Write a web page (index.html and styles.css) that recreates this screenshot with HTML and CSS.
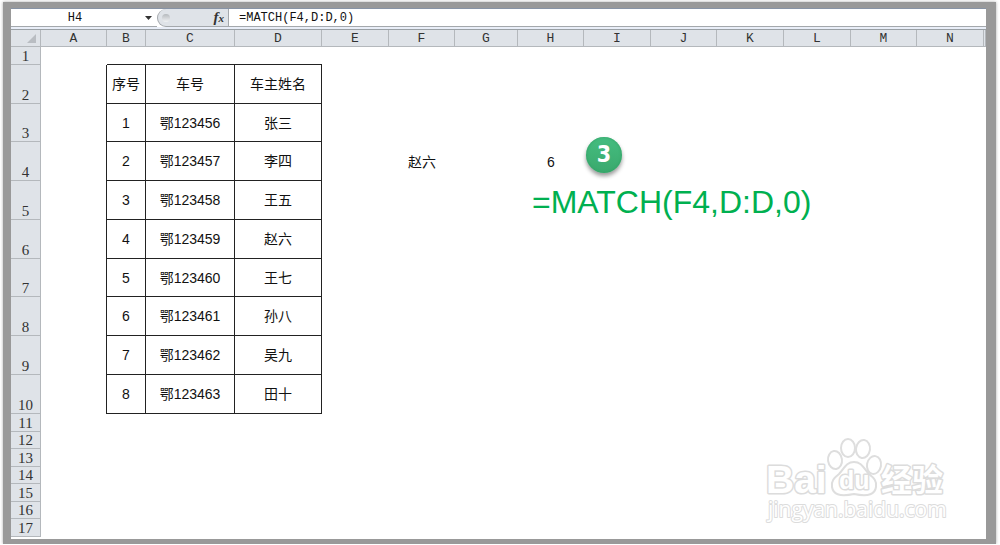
FILE: index.html
```
<!DOCTYPE html>
<html lang="zh-CN">
<head>
<meta charset="utf-8">
<title>H4 =MATCH(F4,D:D,0)</title>
<link rel="stylesheet" href="styles.css">
</head>
<body>
<main class="frame">
  <header class="formula-bar">
    <input class="name-box" type="text" value="H4" aria-label="名称框">
    <button class="drop" type="button" aria-label="名称列表"><svg width="7" height="4" viewBox="0 0 7 4"><path d="M0 0h7L3.500 4z" fill="#333"/></svg></button>
    <div class="tools">
      <span class="knob"></span>
      <button class="fx" type="button" aria-label="插入函数"><i>f</i><i class="fx-x">x</i></button>
    </div>
    <input class="formula" type="text" value="=MATCH(F4,D:D,0)" aria-label="编辑栏">
  </header>
  <div class="sheet-area">
    <table class="sheet">
      <colgroup>
        <col class="w30"><col class="w66"><col class="w39"><col class="w89"><col class="w87"><col class="w67"><col class="w66"><col class="w63"><col class="w66"><col class="w67"><col class="w66"><col class="w67"><col class="w67"><col class="w66"><col class="w67"><col>
      </colgroup>
      <thead>
        <tr><th class="corner"><svg width="9" height="9" viewBox="0 0 9 9"><path d="M9 0v9H0z" fill="#b9bdc2"/></svg></th><th>A</th><th>B</th><th>C</th><th>D</th><th>E</th><th>F</th><th>G</th><th>H</th><th>I</th><th>J</th><th>K</th><th>L</th><th>M</th><th>N</th><th></th></tr>
      </thead>
      <tbody>
        <tr class="short"><th>1</th><td></td><td class="under"></td><td class="under"></td><td class="under"></td><td colspan="11"></td></tr>
        <tr><th>2</th><td class="edge"></td><td class="box">序号</td><td class="box">车号</td><td class="box">车主姓名</td><td colspan="11"></td></tr>
        <tr class="mid"><th>3</th><td class="edge"></td><td class="box">1</td><td class="box">鄂123456</td><td class="box">张三</td><td colspan="11"></td></tr>
        <tr><th>4</th><td class="edge"></td><td class="box">2</td><td class="box">鄂123457</td><td class="box">李四</td><td></td><td>赵六</td><td></td><td>6</td><td colspan="7"></td></tr>
        <tr><th>5</th><td class="edge"></td><td class="box">3</td><td class="box">鄂123458</td><td class="box">王五</td><td colspan="11"></td></tr>
        <tr><th>6</th><td class="edge"></td><td class="box">4</td><td class="box">鄂123459</td><td class="box">赵六</td><td colspan="11"></td></tr>
        <tr class="mid"><th>7</th><td class="edge"></td><td class="box">5</td><td class="box">鄂123460</td><td class="box">王七</td><td colspan="11"></td></tr>
        <tr><th>8</th><td class="edge"></td><td class="box">6</td><td class="box">鄂123461</td><td class="box">孙八</td><td colspan="11"></td></tr>
        <tr><th>9</th><td class="edge"></td><td class="box">7</td><td class="box">鄂123462</td><td class="box">吴九</td><td colspan="11"></td></tr>
        <tr><th>10</th><td class="edge"></td><td class="box">8</td><td class="box">鄂123463</td><td class="box">田十</td><td colspan="11"></td></tr>
        <tr class="short"><th>11</th><td colspan="15"></td></tr>
        <tr class="short"><th>12</th><td colspan="15"></td></tr>
        <tr class="short"><th>13</th><td colspan="15"></td></tr>
        <tr class="short"><th>14</th><td colspan="15"></td></tr>
        <tr class="short"><th>15</th><td colspan="15"></td></tr>
        <tr class="short"><th>16</th><td colspan="15"></td></tr>
        <tr class="short"><th>17</th><td colspan="15"></td></tr>
      </tbody>
    </table>
    <span class="step">3</span>
    <p class="note">=MATCH(F4,D:D,0)</p>
    <svg class="watermark" width="190" height="94" viewBox="0 0 190 94">
      <g fill="#fff" stroke="#dedede" stroke-width="2" stroke-linejoin="round">
        <ellipse cx="75" cy="23" rx="7" ry="9" transform="rotate(-8 75 23)"/>
        <ellipse cx="88" cy="11" rx="7" ry="9"/>
        <ellipse cx="103" cy="12" rx="7" ry="9" transform="rotate(8 103 12)"/>
        <ellipse cx="114" cy="28" rx="7" ry="9" transform="rotate(10 114 28)"/>
        <path d="M94 25C86 25 84 32 79 37C74 41 71 44 72 50C73 57 79 60 94 57C109 60 115 57 116 50C117 44 114 41 109 37C104 32 102 25 94 25Z"/>
      </g>
      <g class="wm-text">
        <text class="wm-latin" x="6" y="56">Bai</text>
        <text class="wm-du" x="79" y="52">du</text>
        <text class="wm-cjk" x="121" y="54">经验</text>
        <text class="wm-url" x="8" y="80">jingyan.baidu.com</text>
      </g>
    </svg>
  </div>
</main>
</body>
</html>
```
FILE: styles.css
```
* { box-sizing: border-box; }
html { background: #fff; }
body { margin: 0; padding: 2px 4px 0 3px; }
.frame {
  border: solid #999;
  border-width: 6px 10px 5px 8px;
  box-shadow: 0 0 3px #aaa;
  background: #fff;
}
.formula-bar {
  display: flex;
  height: 22px;
  padding-bottom: 3px;
  border-top: 1px solid #8793a5;
  border-bottom: 1px solid #9aa0a5;
  background: linear-gradient(#fff 18px, #e9eef8 18px);
}
.formula-bar input, .formula-bar button {
  height: 18px;
  margin: 0;
  padding: 0;
  border: 0;
  border-bottom: 1px solid #a4a8ac;
  background: #fff;
  color: #111;
  outline: 0;
}
.formula-bar input { font: 12px/17px "Liberation Mono", monospace; }
.formula-bar .name-box { width: 128px; text-align: center; }
.formula-bar .drop { width: 18px; display: flex; align-items: center; justify-content: center; }
.tools {
  width: 72px;
  height: 18px;
  display: flex;
  align-items: center;
  justify-content: space-between;
  padding: 0 4px;
  border: 1px solid #a4a8ac;
  border-top: 0;
  border-radius: 9px 0 0 9px;
  background: #dfe3e8;
}
.knob { width: 8px; height: 8px; border-radius: 4px; background: linear-gradient(#b5b9bd, #f0f2f4); }
.formula-bar .fx {
  border: 0;
  height: 17px;
  background: none;
  font: bold 15px/16px "Liberation Serif", serif;
  color: #333;
}
.fx .fx-x { font-size: 11px; }
.formula-bar .formula { flex: 1; min-width: 0; padding-left: 10px; }
.sheet-area { position: relative; padding-bottom: 2px; }
.sheet { width: 100%; table-layout: fixed; border-collapse: separate; border-spacing: 0; }
.w30 { width: 30px; } .w39 { width: 39px; } .w63 { width: 63px; }
.w66 { width: 66px; } .w67 { width: 67px; } .w87 { width: 87px; } .w89 { width: 89px; }
.sheet th {
  padding: 0;
  border-right: 1px solid #b4b8bc;
  border-bottom: 1px solid #b4b8bc;
  background: #dfe3e8;
  color: #333;
  font: 15px/15px "Liberation Serif", serif;
  vertical-align: bottom;
}
.sheet thead th { height: 17px; font: 13px/14px "Liberation Mono", monospace; }
.sheet thead .corner { text-align: right; line-height: 9px; padding: 0 4px 3px 0; }
.corner svg { display: inline-block; vertical-align: bottom; }
.sheet tbody tr { height: 39px; }
.sheet tbody .mid { height: 38px; }
.sheet tbody .short { height: 18px; }
.sheet tbody .short:nth-child(even) { height: 17px; }
.sheet td {
  padding: 0;
  text-align: center;
  vertical-align: middle;
  color: #111;
  font: 14px/16px "Liberation Sans", "Noto Sans CJK SC", sans-serif;
  white-space: nowrap;
}
.sheet .box { border-right: 1px solid #222; border-bottom: 1px solid #222; }
.sheet .edge { border-right: 1px solid #222; }
.sheet .under { border-bottom: 1px solid #222; }
.step {
  position: absolute;
  left: 575px;
  top: 107px;
  width: 36px;
  height: 36px;
  border-radius: 50%;
  background: linear-gradient(#45bd80, #3aa96d);
  box-shadow: 0 3px 4px #999, inset 0 0 3px #2e9c61;
  color: #fff;
  font: bold 23px/35px "DejaVu Sans Condensed", "DejaVu Sans", sans-serif;
  text-align: center;
}
.note {
  position: absolute;
  left: 521px;
  top: 153px;
  margin: 0;
  color: #00b050;
  font: 32px/38px "Liberation Sans", sans-serif;
  white-space: nowrap;
}
.watermark { position: absolute; right: 36px; bottom: 8px; }
.wm-text { fill: #fff; stroke: #dcdcdc; stroke-width: 3px; paint-order: stroke; stroke-linejoin: round; }
.wm-latin { font: bold 39px "Liberation Sans", sans-serif; }
.wm-du { font: bold 25px "Liberation Sans", sans-serif; }
.wm-cjk { font: bold 31px "Noto Sans CJK SC", sans-serif; }
.wm-url { font: 21px "Open Sans", sans-serif; stroke-width: 2px; }
```
